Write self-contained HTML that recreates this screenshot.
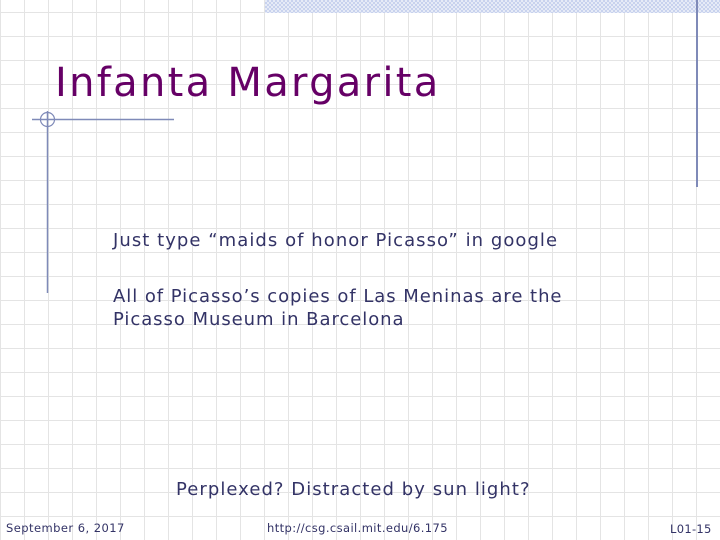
<!DOCTYPE html>
<html><head><meta charset="utf-8"><style>
body{margin:0}
#s{position:relative;width:720px;height:540px;overflow:hidden;background-color:#fff;
background-image:repeating-linear-gradient(90deg,transparent 0 23px,#e4e4e4 23px 24px),repeating-linear-gradient(0deg,transparent 0 23px,#e4e4e4 23px 24px);
background-position:1px 0,0 0;font-family:"DejaVu Sans",sans-serif}
.m{position:absolute;white-space:nowrap;color:#333366}
#band{position:absolute;left:265px;top:0;width:455px;height:13px;
background-color:#e6ebf7;background-image:repeating-conic-gradient(#c8d2ee 0 25%,transparent 0 50%);background-size:4px 4px}
</style></head><body><div id="s">
<div id="band"></div>
<div style="position:absolute;left:696px;top:0;width:2px;height:187px;background:#7f8ab8"></div>
<svg style="position:absolute;left:0;top:0" width="720" height="540">
<line x1="32" y1="119.5" x2="174" y2="119.5" stroke="#7f8ab8" stroke-width="1.5"/>
<line x1="47.5" y1="111" x2="47.5" y2="293" stroke="#7f8ab8" stroke-width="1.5"/>
<circle cx="47.5" cy="119.5" r="7" fill="none" stroke="#7f8ab8" stroke-width="1.2"/>
</svg>
<div class="m" style="left:55px;top:60px;font-size:40px;color:#660066;letter-spacing:2.3px">Infanta Margarita</div>
<div class="m" style="left:113px;top:230px;font-size:18px;letter-spacing:1.05px">Just type “maids of honor Picasso” in google</div>
<div class="m" style="left:113px;top:285px;font-size:18px;line-height:23px;letter-spacing:0.95px">All of Picasso’s copies of Las Meninas are the<br>Picasso Museum in Barcelona</div>
<div class="m" style="left:176px;top:479px;font-size:18px;letter-spacing:1.05px">Perplexed? Distracted by sun light?</div>
<div class="m" style="left:6px;top:521px;font-size:11.5px;letter-spacing:0.45px">September 6, 2017</div>
<div class="m" style="left:267px;top:521px;font-size:11.5px;letter-spacing:0.4px">http://csg.csail.mit.edu/6.175</div>
<div class="m" style="left:670px;top:522px;font-size:11.5px;letter-spacing:0.3px">L01-15</div>
</div></body></html>
